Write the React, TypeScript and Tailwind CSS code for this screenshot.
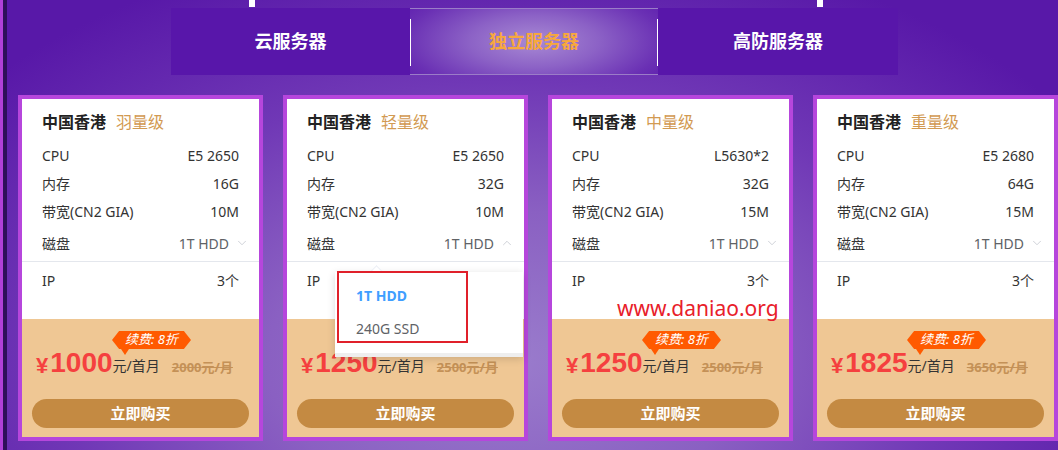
import React from 'react';
import { ChevronDown, ChevronUp } from 'lucide-react';

interface Plan {
  level: string;
  cpu: string;
  ram: string;
  bw: string;
  price: string;
  old: string;
  open?: boolean;
}

const plans: Plan[] = [
  { level: '羽量级', cpu: 'E5 2650', ram: '16G', bw: '10M', price: '1000', old: '2000' },
  { level: '轻量级', cpu: 'E5 2650', ram: '32G', bw: '10M', price: '1250', old: '2500', open: true },
  { level: '中量级', cpu: 'L5630*2', ram: '32G', bw: '15M', price: '1250', old: '2500' },
  { level: '重量级', cpu: 'E5 2680', ram: '64G', bw: '15M', price: '1825', old: '3650' },
];

const Row: React.FC<{ label: string; value: string }> = ({ label, value }) => (
  <div className="flex justify-between items-center h-[28px] text-[14px] text-[#333]">
    <span>{label}</span>
    <span>{value}</span>
  </div>
);

const PlanCard: React.FC<{ plan: Plan }> = ({ plan }) => (
  <div className="w-[245px] h-[346px] border-4 border-[#b646dc] flex flex-col shrink-0">
    {/* specs */}
    <div className="relative h-[220px] bg-white flex flex-col">
      <div className="px-[20px] pt-[12px]">
        <div className="flex items-center gap-[10px] h-[22px]">
          <span className="text-[16px] font-bold text-[#222]">中国香港</span>
          <span className="text-[16px] text-[#d29a52]">{plan.level}</span>
        </div>
        <div className="mt-[8px]">
          <Row label="CPU" value={plan.cpu} />
          <Row label="内存" value={plan.ram} />
          <Row label="带宽(CN2 GIA)" value={plan.bw} />
        </div>
        <div className="flex justify-between items-center h-[36px] text-[14px] mr-[-10px]">
          <span className="text-[#333]">磁盘</span>
          <span className="flex items-center gap-[6px] text-[#606266]">
            1T HDD
            {plan.open ? (
              <ChevronUp size={14} strokeWidth={1.3} className="text-[#c0c4cc]" />
            ) : (
              <ChevronDown size={14} strokeWidth={1.3} className="text-[#c0c4cc]" />
            )}
          </span>
        </div>
      </div>
      <div className="border-t border-[#e4e7ed] px-[20px] pt-[8px] flex justify-between text-[14px] text-[#333] h-[20px] box-content">
        <span>IP</span>
        {!plan.open && <span>3个</span>}
      </div>

      {plan.open && (
        <div className="absolute left-[48px] top-[173px] w-[188px] h-[85px] bg-white shadow-[0_2px_8px_rgba(0,0,0,0.15)] border-b-[4px] border-[#eeeeee] z-10">
          <div className="absolute -top-[5px] left-[37px] w-[9px] h-[9px] bg-white rotate-45 border-l border-t border-[#ebeef5]" />
          <div className="relative flex flex-col pl-[21px] pt-[13px] text-[14px]">
            <span className="h-[22px] leading-[22px] font-bold text-[#409eff]">1T HDD</span>
            <span className="mt-[11px] h-[22px] leading-[22px] text-[#606266]">240G SSD</span>
          </div>
          <div className="absolute left-[2px] -top-[1px] w-[131px] h-[72px] border-2 border-[#e0202a]" />
        </div>
      )}
    </div>

    {/* price */}
    <div className="relative flex-1 bg-[#efc794] flex flex-col">
      <div className="absolute left-[90px] top-[12px]">
        <div className="w-[79px] h-[18px] bg-[#ff5a00] [clip-path:polygon(9%_0,91%_0,100%_50%,91%_100%,9%_100%,0_50%)] flex items-center justify-center text-[13px] italic text-white">
          续费: 8折
        </div>
        <div className="ml-[9px] w-0 h-0 border-l-[4px] border-r-[4px] border-t-[6px] border-l-transparent border-r-transparent border-t-[#ff5a00]" />
      </div>
      <div className="flex items-end pl-[14px] pt-[28px] h-[60px]">
        <span className="text-[22px] font-bold text-[#f5403f] leading-[27px] mr-[2px] font-['Liberation_Sans','Noto_Sans_CJK_SC',sans-serif]">¥</span>
        <span className="text-[28px] font-bold text-[#f5403f] leading-[32px] font-['Liberation_Sans',sans-serif]">{plan.price}</span>
        <span className="text-[14px] text-[#333] leading-[22px] mb-[2px]">元/首月</span>
        <span className="ml-[12px] text-[13px] font-bold text-[#c49157] line-through leading-[20px] mb-[2px]">{plan.old}元/月</span>
      </div>
      <button className="mx-[10px] mt-[20px] h-[29px] rounded-full bg-[#c48a42] text-white text-[15px] font-bold">
        立即购买
      </button>
    </div>
  </div>
);

const App: React.FC = () => {
  return (
    <div className="relative w-[1058px] h-[450px] overflow-hidden font-['Noto_Sans','Noto_Sans_CJK_SC',sans-serif] bg-[radial-gradient(ellipse_65%_95%_at_48%_80%,#9a7ccc_0%,#8a60c2_35%,#7038b6_65%,#5818a8_100%)]">
      {/* edge decorations */}
      <div className="absolute left-0 top-0 w-[3px] h-full bg-[#b040d8]" />
      <div className="absolute left-[3px] top-0 w-[4px] h-full bg-[#2e0f5a]" />
      <div className="absolute left-[249px] top-0 w-[6px] h-[7px] bg-white" />
      <div className="absolute left-[817px] top-0 w-[6px] h-[7px] bg-white" />

      {/* tabs */}
      <div className="ml-[171px] mt-[8px] w-[727px] h-[67px] flex bg-[#5816aa] text-[18px] font-bold">
        <div className="w-[239px] flex items-center justify-center text-white">云服务器</div>
        <div className="relative w-[248px] flex items-center justify-center text-[#f7a83c] border-y border-[#9b7cc8] bg-[radial-gradient(ellipse_65%_100%_at_50%_50%,#a88ad4_0%,#8c62c6_40%,#6a30b4_80%,#5e1eae_100%)]">
          <div className="absolute left-0 top-[10px] w-[1px] h-[47px] bg-white" />
          独立服务器
          <div className="absolute right-0 top-[10px] w-[1px] h-[47px] bg-white" />
        </div>
        <div className="w-[240px] flex items-center justify-center text-white">高防服务器</div>
      </div>

      {/* cards */}
      <div className="flex gap-[20px] pl-[18px] mt-[20px]">
        {plans.map((p, i) => (
          <PlanCard key={i} plan={p} />
        ))}
      </div>

      {/* watermark */}
      <div className="absolute left-[617px] top-[293px] text-[21px] text-[#e8202a] z-20">www.daniao.org</div>
    </div>
  );
};

export default App;
